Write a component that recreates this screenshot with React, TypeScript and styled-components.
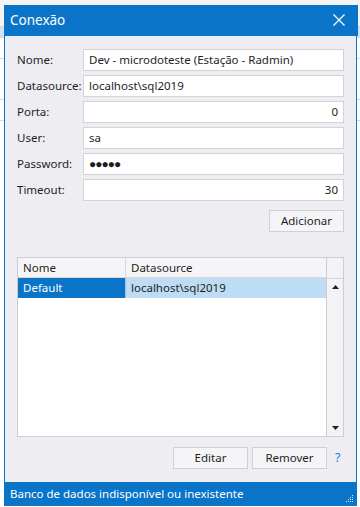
import React from "react";
import styled, { createGlobalStyle } from "styled-components";

const GlobalStyle = createGlobalStyle`
  html, body {
    margin: 0;
    padding: 0;
    background: #f4f4f4;
  }
  body {
    font-family: "Noto Sans", "Open Sans", Arial, sans-serif;
    font-size: 11.5px;
    color: #1e1e1e;
  }
`;

const Screen = styled.div`
  position: relative;
  width: 360px;
  height: 507px;
  overflow: hidden;
  background: #f4f4f4;
`;

const BehindRow = styled.div<{ $selected?: boolean; $top: number; $h: number }>`
  position: absolute;
  left: 0;
  right: 0;
  top: ${(p) => p.$top}px;
  height: ${(p) => p.$h}px;
  background: ${(p) => (p.$selected ? "#cde3f6" : "#ffffff")};
  border-bottom: 1px solid #dadada;
`;

const Dialog = styled.div`
  position: absolute;
  top: 5px;
  left: 4px;
  width: 353px;
  height: 501px;
  box-sizing: border-box;
  border: 1px solid #0a76cc;
  background: #eeedf2;
  display: flex;
  flex-direction: column;
`;

const TitleBar = styled.div`
  height: 32px;
  margin: -1px -2px 0 -1px;
  background: #0a74c8;
  color: #ffffff;
  display: flex;
  align-items: center;
  justify-content: space-between;
  padding: 0 12px 0 6px;
  font-size: 13.5px;
`;

const CloseButton = styled.span`
  display: flex;
  width: 14px;
  height: 14px;
`;

const Body = styled.div`
  flex: 1;
  display: flex;
  flex-direction: column;
  padding: 13px 12px 0 12px;
`;

const Form = styled.div`
  display: grid;
  grid-template-columns: 66px 1fr;
  row-gap: 4px;
  align-items: center;
`;

const Label = styled.label`
  font-size: 11.5px;
  color: #1e1e1e;
`;

const Field = styled.div<{ $align?: "left" | "right" }>`
  height: 22px;
  box-sizing: border-box;
  border: 1px solid #d3d3d6;
  background: #ffffff;
  display: flex;
  align-items: center;
  justify-content: ${(p) => (p.$align === "right" ? "flex-end" : "flex-start")};
  padding: 0 5px;
  font-size: 11.5px;
  color: #1e1e1e;
  white-space: nowrap;
  overflow: hidden;
`;

const Dots = styled.span`
  letter-spacing: -1px;
  font-size: 12px;
`;

const ButtonRow = styled.div<{ $mt: number }>`
  display: flex;
  justify-content: flex-end;
  align-items: center;
  gap: 4px;
  margin-top: ${(p) => p.$mt}px;
`;

const Button = styled.button`
  width: 75px;
  height: 22px;
  box-sizing: border-box;
  border: 1px solid #cfcfd4;
  background: #f5f5f7;
  font-family: inherit;
  font-size: 11.5px;
  color: #1e1e1e;
  padding: 0;
`;

const Help = styled.span`
  width: 13px;
  padding-left: 4px;
  box-sizing: border-box;
  color: #1a7fd6;
  font-size: 12.5px;
`;

const Table = styled.div`
  margin-top: 25px;
  height: 180px;
  box-sizing: border-box;
  border: 1px solid #cdcdd4;
  background: #ffffff;
  display: grid;
  grid-template-columns: 1fr 17px;
`;

const Grid = styled.div`
  display: flex;
  flex-direction: column;
`;

const Row = styled.div`
  display: grid;
  grid-template-columns: 108px 1fr;
  height: 20px;
`;

const HeaderCell = styled.div<{ $last?: boolean }>`
  background: #f5f5f7;
  border-right: ${(p) => (p.$last ? "none" : "1px solid #d6d6dc")};
  border-bottom: 1px solid #d6d6dc;
  display: flex;
  align-items: center;
  padding-left: 5px;
`;

const Cell = styled.div<{ $primary?: boolean }>`
  background: ${(p) => (p.$primary ? "#0a74c8" : "#bedcf3")};
  color: ${(p) => (p.$primary ? "#ffffff" : "#1e1e1e")};
  border-right: ${(p) => (p.$primary ? "1px solid #9cc4e6" : "none")};
  display: flex;
  align-items: center;
  padding-left: 5px;
`;

const Scroll = styled.div`
  background: #f3f3f6;
  border-left: 1px solid #cdcdd4;
  display: flex;
  flex-direction: column;
`;

const ScrollCorner = styled.div`
  height: 20px;
  border-bottom: 1px solid #d6d6dc;
`;

const ScrollTrack = styled.div`
  flex: 1;
  display: flex;
  flex-direction: column;
  justify-content: space-between;
  align-items: center;
  padding: 6px 0 6px;
`;

const StatusBar = styled.div`
  height: 25px;
  margin: 13px -1px -1px -1px;
  background: #0a74c8;
  color: #ffffff;
  display: flex;
  align-items: center;
  justify-content: space-between;
  padding: 0 3px 0 6px;
`;

const Arrow = ({ up }: { up?: boolean }) => (
  <svg width="7" height="4" viewBox="0 0 7 4">
    <path d={up ? "M0 4 L3.5 0 L7 4 Z" : "M0 0 L3.5 4 L7 0 Z"} fill="#202020" />
  </svg>
);

const Grip = () => (
  <svg width="10" height="10" viewBox="0 0 10 10" style={{ alignSelf: "flex-end", marginBottom: 3 }}>
    {[
      [8, 2],
      [6, 4],
      [8, 4],
      [4, 6],
      [6, 6],
      [8, 6],
      [2, 8],
      [4, 8],
      [6, 8],
      [8, 8],
    ].map(([x, y]) => (
      <rect key={`${x}-${y}`} x={x} y={y} width="1" height="1" fill="#d8e8f6" />
    ))}
  </svg>
);

const fields: { label: string; value: React.ReactNode; align?: "left" | "right" }[] = [
  { label: "Nome:", value: "Dev - microdoteste (Estação - Radmin)" },
  { label: "Datasource:", value: "localhost\\sql2019" },
  { label: "Porta:", value: "0", align: "right" },
  { label: "User:", value: "sa" },
  { label: "Password:", value: <Dots>●●●●●</Dots> },
  { label: "Timeout:", value: "30", align: "right" },
];

export default function App() {
  return (
    <Screen>
      <GlobalStyle />
      <BehindRow $top={0} $h={26} style={{ background: "#f4f4f4" }} />
      <BehindRow $top={27} $h={10} $selected />
      <BehindRow $top={38} $h={20} />
      <BehindRow $top={59} $h={40} />
      <BehindRow $top={100} $h={20} />
      <BehindRow $top={121} $h={386} />

      <Dialog>
        <TitleBar>
          <span>Conexão</span>
          <CloseButton>
            <svg width="14" height="14" viewBox="0 0 14 14">
              <path d="M1.5 1.5 L12.5 12.5 M12.5 1.5 L1.5 12.5" stroke="#ffffff" strokeWidth="1.3" />
            </svg>
          </CloseButton>
        </TitleBar>
        <Body>
          <Form>
            {fields.map((f) => (
              <React.Fragment key={f.label}>
                <Label>{f.label}</Label>
                <Field $align={f.align}>{f.value}</Field>
              </React.Fragment>
            ))}
          </Form>

          <ButtonRow $mt={9}>
            <Button>Adicionar</Button>
          </ButtonRow>

          <Table>
            <Grid>
              <Row>
                <HeaderCell>Nome</HeaderCell>
                <HeaderCell $last>Datasource</HeaderCell>
              </Row>
              <Row>
                <Cell $primary>Default</Cell>
                <Cell>localhost\sql2019</Cell>
              </Row>
            </Grid>
            <Scroll>
              <ScrollCorner />
              <ScrollTrack>
                <Arrow up />
                <Arrow />
              </ScrollTrack>
            </Scroll>
          </Table>

          <ButtonRow $mt={10}>
            <Button>Editar</Button>
            <Button>Remover</Button>
            <Help>?</Help>
          </ButtonRow>
        </Body>
        <StatusBar>
          <span>Banco de dados indisponível ou inexistente</span>
          <Grip />
        </StatusBar>
      </Dialog>
    </Screen>
  );
}
